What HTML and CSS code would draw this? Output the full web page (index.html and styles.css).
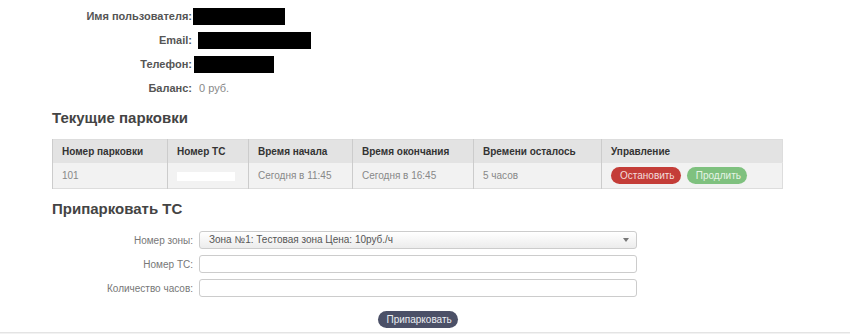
FILE: index.html
```html
<!DOCTYPE html>
<html lang="ru">
<head>
  <meta charset="UTF-8" />
  <title>Личный кабинет – Парковка</title>
  <link rel="stylesheet" href="styles.css">
</head>
<body>
  <div class="page">
    <div class="profile">
      <div class="profile-row">
        <span class="profile-label">Имя пользователя:</span>
        <span class="mask mask-name"></span>
      </div>
      <div class="profile-row">
        <span class="profile-label">Email:</span>
        <span class="mask mask-email"></span>
      </div>
      <div class="profile-row">
        <span class="profile-label">Телефон:</span>
        <span class="mask mask-phone"></span>
      </div>
      <div class="profile-row">
        <span class="profile-label">Баланс:</span>
        <span class="profile-value">0 руб.</span>
      </div>
    </div>

    <h2 class="section-title">Текущие парковки</h2>
    <table class="parkings">
      <thead>
        <tr>
          <th class="col-num">Номер парковки</th>
          <th class="col-car">Номер ТС</th>
          <th class="col-start">Время начала</th>
          <th class="col-end">Время окончания</th>
          <th class="col-left">Времени осталось</th>
          <th>Управление</th>
        </tr>
      </thead>
      <tbody>
        <tr>
          <td>101</td>
          <td><span class="mask-white"></span></td>
          <td>Сегодня в 11:45</td>
          <td>Сегодня в 16:45</td>
          <td>5 часов</td>
          <td>
            <button class="btn btn-stop">Остановить</button>
            <button class="btn btn-extend">Продлить</button>
          </td>
        </tr>
      </tbody>
    </table>

    <h2 class="section-title park-title">Припарковать ТС</h2>
    <form class="park-form">
      <div class="form-row">
        <label class="form-label">Номер зоны:</label>
        <div class="select">Зона №1: Тестовая зона Цена: 10руб./ч<span class="select-arrow"></span></div>
      </div>
      <div class="form-row">
        <label class="form-label">Номер ТС:</label>
        <input type="text" class="form-input" />
      </div>
      <div class="form-row">
        <label class="form-label">Количество часов:</label>
        <input type="text" class="form-input" />
      </div>
      <div class="form-submit">
        <button type="button" class="btn btn-park">Припарковать</button>
      </div>
    </form>
  </div>
  <div class="footer"></div>
</body>
</html>
```

FILE: styles.css
```css
body {
  margin: 0;
  font-family: "Liberation Sans", Arial, sans-serif;
  background: #fff;
  color: #555;
}
.page {
  width: 783px;
  padding: 4px 0 0 52px;
  height: 332px;
  box-sizing: border-box;
}
.profile-row {
  display: flex;
  align-items: center;
  height: 24px;
}
.profile-label {
  width: 192px;
  margin-left: -52px;
  text-align: right;
  font-size: 11px;
  font-weight: bold;
  color: #555;
  white-space: nowrap;
  overflow: hidden;
}
.profile-value {
  margin-left: 7px;
  font-size: 11px;
  color: #888;
}
.mask {
  display: inline-block;
  height: 17px;
  background: #000;
}
.mask-name { width: 92px; margin-left: 1px; }
.mask-email { width: 113px; margin-left: 6px; }
.mask-phone { width: 80px; margin-left: 2px; }

.section-title {
  margin: 8px 0 11px;
  height: 20px;
  line-height: 20px;
  font-size: 15px;
  font-weight: bold;
  color: #444;
}
.park-title {
  margin: 10px 0 12px;
}

.parkings {
  width: 731px;
  border-collapse: collapse;
  border: 1px solid #ddd;
  font-size: 10px;
}
.parkings th {
  height: 22px;
  padding: 0 9px;
  text-align: left;
  background: #e3e3e3;
  color: #333;
  border-left: 1px solid #ccc;
}
.parkings td {
  height: 25px;
  padding: 0 9px;
  background: #f2f2f2;
  color: #888;
  border-left: 1px solid #ccc;
  border-top: 1px solid #e3e3e3;
}
.col-num { width: 96px; }
.col-car { width: 62px; }
.col-start { width: 85px; }
.col-end { width: 102px; }
.col-left { width: 109px; }
.mask-white {
  display: inline-block;
  width: 58px;
  height: 9px;
  background: #fff;
  vertical-align: middle;
}

.btn {
  height: 17px;
  padding: 0 9px;
  border: none;
  border-radius: 9px;
  font-family: "Liberation Sans", Arial, sans-serif;
  font-size: 10px;
  color: #fff;
  cursor: pointer;
}
.btn-stop {
  width: 70px;
  background: #c43d38;
  color: #f3dcdb;
}
.btn-extend {
  width: 60px;
  margin-left: 3px;
  background: #7fc17f;
  color: #e6f4e6;
}
.btn-park {
  width: 80px;
  background: #4b5067;
  color: #eceef3;
}

.park-form {
  font-size: 10px;
}
.form-row {
  display: flex;
  align-items: center;
  gap: 6px;
  height: 18px;
  margin-bottom: 6px;
}
.form-label {
  width: 193px;
  margin-left: -52px;
  text-align: right;
  color: #777;
}
.select,
.form-input {
  box-sizing: border-box;
  width: 438px;
  height: 18px;
  border: 1px solid #ccc;
  border-radius: 3px;
}
.select {
  position: relative;
  padding-left: 9px;
  line-height: 16px;
  color: #555;
  background: linear-gradient(#fff, #ececec);
}
.select-arrow {
  position: absolute;
  right: 7px;
  top: 6px;
  border-left: 3px solid transparent;
  border-right: 3px solid transparent;
  border-top: 4px solid #777;
}
.form-input {
  background: #fff;
}
.form-submit {
  margin-top: 14px;
  text-align: center;
}
.footer {
  height: 2px;
  background: #f2f2f2;
  border-top: 1px solid #e4e4e4;
}
```
